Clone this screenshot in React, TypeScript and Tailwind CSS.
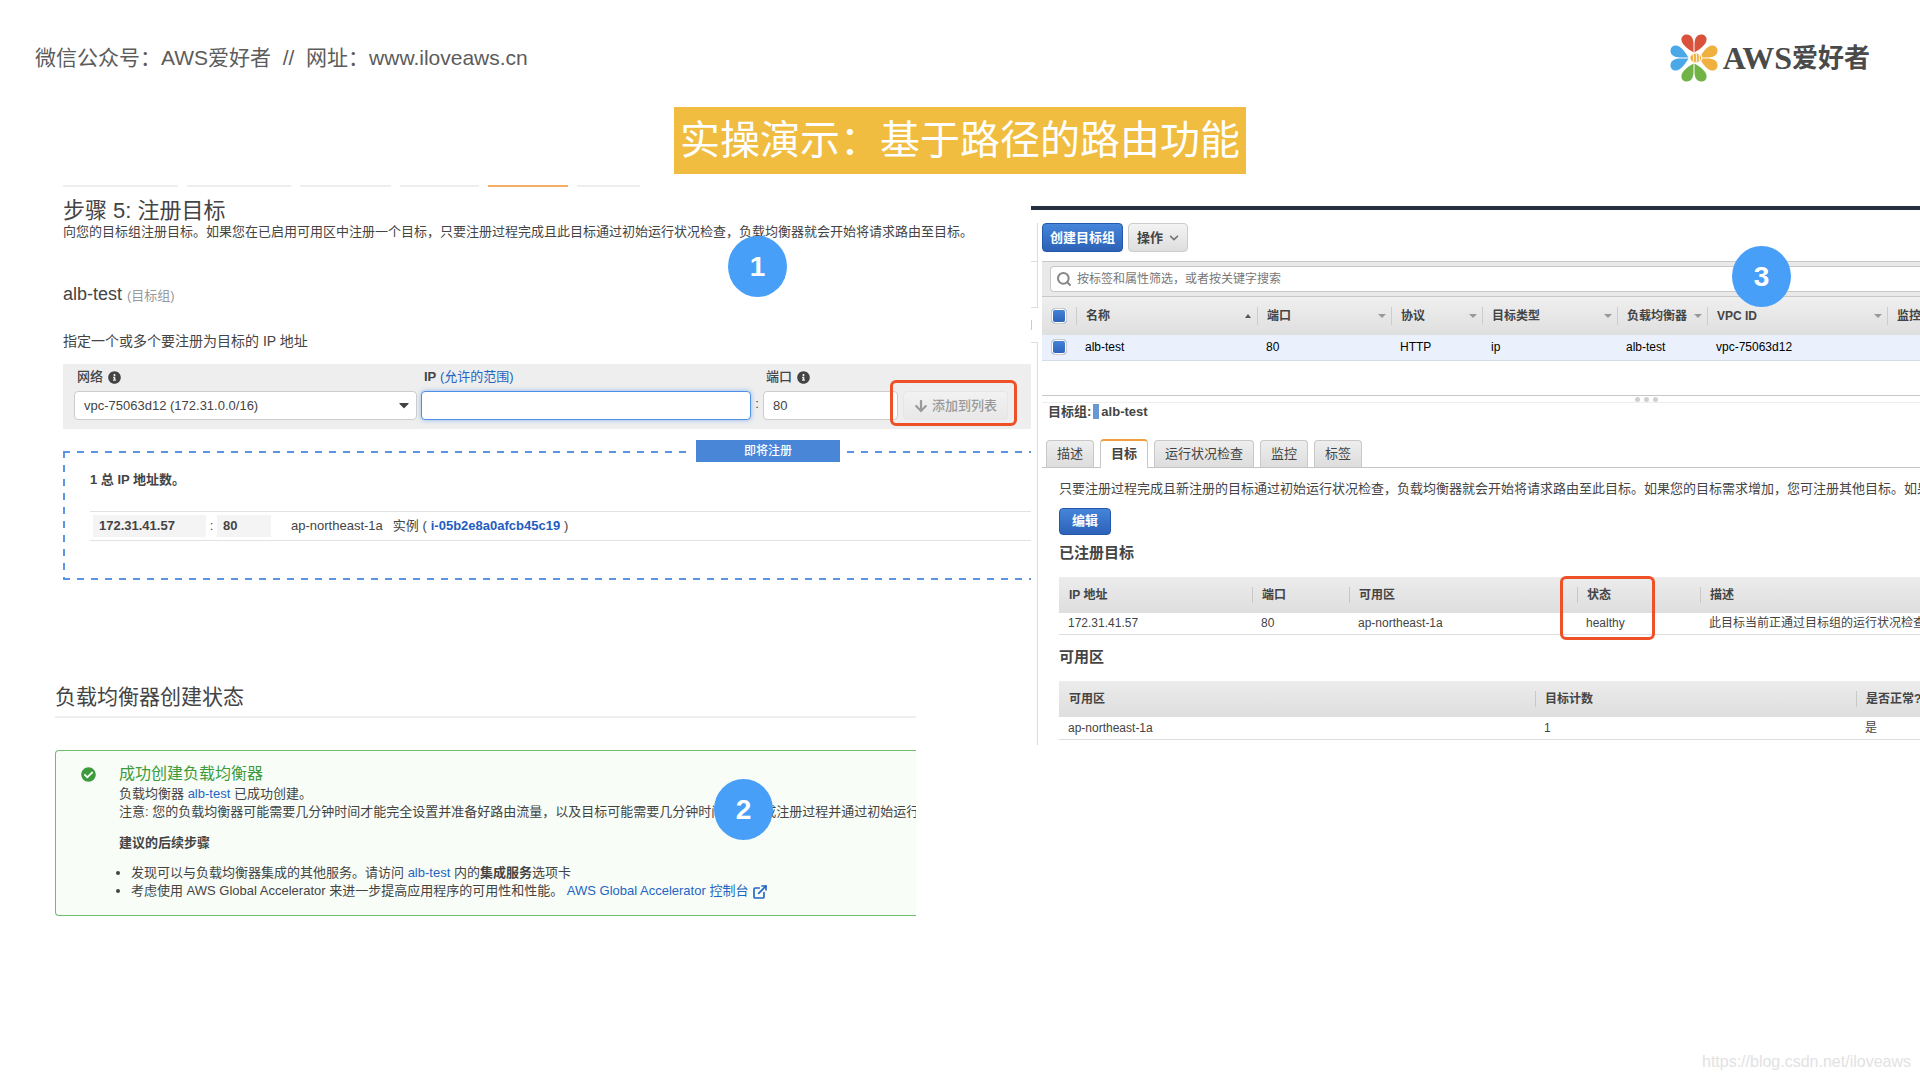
import type { ReactNode } from "react";
import { ExternalLink, Search } from "lucide-react";
import {
  FaArrowDown,
  FaCaretDown,
  FaCheckCircle,
  FaChevronDown,
  FaInfoCircle,
} from "react-icons/fa";

type Column = {
  label: string;
  value: string;
  width: string;
  highlight?: boolean;
};

const steps = [
  { width: "w-[115px]", active: false },
  { width: "w-[104px]", active: false },
  { width: "w-[91px]", active: false },
  { width: "w-[79px]", active: false },
  { width: "w-20", active: true },
  { width: "w-[63px]", active: false },
];

const groupColumns: Column[] = [
  { label: "名称", value: "alb-test", width: "w-[181px]" },
  { label: "端口", value: "80", width: "w-[134px]" },
  { label: "协议", value: "HTTP", width: "w-[91px]" },
  { label: "目标类型", value: "ip", width: "w-[135px]" },
  { label: "负载均衡器", value: "alb-test", width: "w-[90px]" },
  { label: "VPC ID", value: "vpc-75063d12", width: "w-[180px]" },
  { label: "监控", value: "", width: "" },
];

const targetColumns: Column[] = [
  { label: "IP 地址", value: "172.31.41.57", width: "w-[193px]" },
  { label: "端口", value: "80", width: "w-[97px]" },
  { label: "可用区", value: "ap-northeast-1a", width: "w-[228px]" },
  { label: "状态", value: "healthy", width: "w-[123px]", highlight: true },
  { label: "描述", value: "此目标当前正通过目标组的运行状况检查。", width: "" },
];

const zoneColumns: Column[] = [
  { label: "可用区", value: "ap-northeast-1a", width: "w-[476px]" },
  { label: "目标计数", value: "1", width: "w-[321px]" },
  { label: "是否正常?", value: "是", width: "" },
];

const tabs = ["描述", "目标", "运行状况检查", "监控", "标签"];

function Logo() {
  const petals = [
    { angle: 0, color: "#d9533c" },
    { angle: 90, color: "#efb03f" },
    { angle: 180, color: "#71b346" },
    { angle: 270, color: "#4aa8e8" },
  ];

  return (
    <div className="flex items-center gap-[5px]">
      <svg viewBox="0 0 48 48" className="size-12" aria-hidden="true">
        {petals.map((petal) => (
          <g
            key={petal.angle}
            fill={petal.color}
            transform={`rotate(${petal.angle} 24 24)`}
          >
            <path d="M23.5 18.4C19.5 16.2 11.4 11 11.4 5.6C11.4 2.6 13.6 0.5 16.8 0.5C21.2 0.5 23.5 4.4 23.5 10Z" />
            <path d="M24.5 18.4C28.5 16.2 36.6 11 36.6 5.6C36.6 2.6 34.4 0.5 31.2 0.5C26.8 0.5 24.5 4.4 24.5 10Z" />
          </g>
        ))}
        <ellipse cx="26" cy="24" rx="6.4" ry="5.6" fill="#fff" />
        <ellipse cx="25.8" cy="24" rx="5.4" ry="4.6" fill="#efb03f" />
        <path
          d="M23 20Q24.5 24 23 28M26 19Q27.5 24 26 29M29 20Q30 24 29 28"
          stroke="#fff"
          strokeWidth="0.9"
          fill="none"
        />
      </svg>
      <span className="flex items-center leading-8 font-bold text-[#4a4a4a]">
        <span className="font-['Liberation_Serif',serif] text-[32px]">AWS</span>
        <span className="text-[26px]">爱好者</span>
      </span>
    </div>
  );
}

function Badge({ place, children }: { place: string; children: ReactNode }) {
  return (
    <span
      className={`absolute z-20 flex h-[61px] w-[59px] items-center justify-center rounded-[50%] bg-[#489ff8] text-[28px] font-bold text-white ${place}`}
    >
      {children}
    </span>
  );
}

function RegisterStep() {
  return (
    <section className="relative ml-[63px] text-[13px] leading-[18px]">
      <div className="flex gap-[9px]">
        {steps.map((step, index) => (
          <span
            key={index}
            className={`h-[2px] ${step.width} ${step.active ? "bg-[#f3ae68]" : "bg-[#eeeeee]"}`}
          />
        ))}
      </div>

      <h2 className="mt-3 text-[22px] leading-6">步骤 5: 注册目标</h2>
      <p className="whitespace-nowrap">
        向您的目标组注册目标。如果您在已启用可用区中注册一个目标，只要注册过程完成且此目标通过初始运行状况检查，负载均衡器就会开始将请求路由至目标。
      </p>

      <h3 className="mt-[43px] text-lg leading-5">
        alb-test <small className="text-[13px] text-[#999999]">(目标组)</small>
      </h3>

      <p className="mt-[25px] text-sm leading-5">指定一个或多个要注册为目标的 IP 地址</p>

      {/* Form */}
      <div className="mt-[13px] grid grid-cols-[347fr_330fr_12px_135fr_110fr] items-end bg-[#eeeeee] pt-1 pr-[23px] pb-[9px] pl-[11px]">
        <div className="pr-1">
          <label htmlFor="network" className="mb-[5px] flex items-center gap-[5px] pl-[3px] font-medium">
            网络 <FaInfoCircle className="size-[13px]" />
          </label>
          <div className="relative">
            <select
              id="network"
              className="block h-[29px] w-full appearance-none rounded border border-[#cccccc] bg-white px-[9px]"
            >
              <option>vpc-75063d12 (172.31.0.0/16)</option>
            </select>
            <FaCaretDown className="pointer-events-none absolute top-[6px] right-[5px] size-4" />
          </div>
        </div>

        <div>
          <div className="mb-[5px] pl-[3px]">
            <label htmlFor="ip" className="font-bold">IP</label>{" "}
            <a href="#" className="text-[#2464c4]">(允许的范围)</a>
          </div>
          <input
            id="ip"
            className="block h-[29px] w-full rounded border border-[#4f8fe6] bg-white px-2 shadow-[0_0_5px_#8db7ee] outline-none"
          />
        </div>

        <span className="pb-[7px] text-center">:</span>

        <div>
          <label htmlFor="port" className="mb-[5px] flex items-center gap-[5px] pl-[3px] font-medium">
            端口 <FaInfoCircle className="size-[13px]" />
          </label>
          <input
            id="port"
            defaultValue="80"
            className="block h-[29px] w-full rounded border border-[#cccccc] bg-white px-[9px]"
          />
        </div>

        <div className="relative pl-[5px]">
          <button
            type="button"
            className="flex h-[29px] w-full items-center justify-center gap-1 rounded border border-[#e6e6e6] bg-linear-to-b from-[#f2f2f2] to-[#e8e8e8] font-medium whitespace-nowrap text-[#999999]"
          >
            <FaArrowDown className="size-[14px]" /> 添加到列表
          </button>
          <span className="pointer-events-none absolute -top-[11px] -right-[9px] -bottom-[6px] -left-2 rounded-md border-3 border-[#ee5028]" />
        </div>
      </div>

      {/* Pending targets */}
      <div className="relative mt-[22px] pt-5 pb-[39px] pl-[27px]">
        <div className="absolute inset-x-0 top-0 h-[2px] bg-[repeating-linear-gradient(90deg,#5b94e3_0_7px,transparent_7px_14px)]" />
        <div className="absolute inset-x-0 bottom-0 h-[2px] bg-[repeating-linear-gradient(90deg,#5b94e3_0_7px,transparent_7px_14px)]" />
        <div className="absolute inset-y-0 left-0 w-[2px] bg-[repeating-linear-gradient(180deg,#5b94e3_0_7px,transparent_7px_14px)]" />

        <div className="absolute -top-[11px] left-[627px] bg-white px-[6px]">
          <div className="bg-[#4a86d8] px-12 py-[2px] text-xs leading-[18px] font-medium text-white">
            即将注册
          </div>
        </div>

        <p className="font-bold">1 总 IP 地址数。</p>

        <div className="mt-[22px] flex items-center border-y border-[#e2e2e2] py-[3px] pl-[3px] whitespace-nowrap">
          <strong className="w-[113px] bg-[#f4f4f4] px-[6px] py-1 leading-[14px]">172.31.41.57</strong>
          <span className="w-[11px] text-center">:</span>
          <strong className="w-[54px] bg-[#f4f4f4] px-[6px] py-1 leading-[14px]">80</strong>
          <span className="ml-5">ap-northeast-1a</span>
          <span className="ml-[10px]">
            实例 (<a href="#" className="px-1 font-bold text-[#1f5cc0]">i-05b2e8a0afcb45c19</a>)
          </span>
        </div>
      </div>

      <Badge place="top-[51px] left-[665px]">1</Badge>
    </section>
  );
}

function CreationStatus() {
  return (
    <section className="relative mt-[103px] mr-[115px] ml-[55px] text-[13px] leading-[18px]">
      <h2 className="border-b-2 border-[#eeeeee] pb-[5px] text-[21px] leading-7">
        负载均衡器创建状态
      </h2>

      <div className="mt-[32px] flex overflow-hidden rounded-l border border-r-0 border-[#6ebd6e] bg-[#f8fdf7] pt-3 pb-[15px] pl-[25px] whitespace-nowrap">
        <FaCheckCircle className="mt-1 size-[15px] shrink-0 text-[#3d9a3d]" />

        <div className="ml-[23px] min-w-0">
          <h3 className="text-base leading-[22px] text-[#3d9a3d]">成功创建负载均衡器</h3>
          <p>
            负载均衡器 <a href="#" className="text-[#2464c4]">alb-test</a> 已成功创建。
          </p>
          <p>
            注意: 您的负载均衡器可能需要几分钟时间才能完全设置并准备好路由流量，以及目标可能需要几分钟时间才能完成注册过程并通过初始运行状况检查。
          </p>

          <h4 className="mt-[13px] font-bold">建议的后续步骤</h4>

          <ul className="mt-3 list-disc pl-3">
            <li>
              发现可以与负载均衡器集成的其他服务。请访问{" "}
              <a href="#" className="text-[#2464c4]">alb-test</a> 内的<b>集成服务</b>选项卡
            </li>
            <li>
              考虑使用 AWS Global Accelerator 来进一步提高应用程序的可用性和性能。{" "}
              <a href="#" className="text-[#2464c4]">
                AWS Global Accelerator 控制台{" "}
                <ExternalLink className="inline size-4" strokeWidth={2.5} />
              </a>
            </li>
          </ul>
        </div>
      </div>

      <Badge place="top-[96px] left-[659px]">2</Badge>
    </section>
  );
}

function DetailTable({ columns }: { columns: Column[] }) {
  return (
    <table className="mt-[14px] w-full table-fixed border-b border-[#dddddd] text-left text-xs whitespace-nowrap">
      <thead className="bg-linear-to-b from-[#ececec] to-[#dedede]">
        <tr className="h-9">
          {columns.map((column, index) => (
            <th key={column.label} className={`relative p-0 ${column.width}`}>
              <div className={`border-l pl-[9px] leading-4 ${index ? "border-[#c8c8c8]" : "border-transparent"}`}>
                {column.label}
              </div>
              {column.highlight && (
                <span className="absolute -top-px -left-[17px] z-10 h-16 w-[95px] rounded-md border-3 border-[#ee5028]" />
              )}
            </th>
          ))}
        </tr>
      </thead>
      <tbody>
        <tr className="h-[22px]">
          {columns.map((column) => (
            <td key={column.label} className="py-0 pr-0 pl-[9px]">{column.value}</td>
          ))}
        </tr>
      </tbody>
    </table>
  );
}

function Checkbox({ label }: { label: string }) {
  return (
    <input
      type="checkbox"
      defaultChecked
      aria-label={label}
      className="ml-[9px] block size-4 appearance-none rounded border border-[#cccccc] bg-linear-to-b from-[#4585da] to-[#2c62b8] shadow-[inset_0_0_0_1px_#ffffff]"
    />
  );
}

function TargetGroups() {
  return (
    <section className="relative mt-8 min-w-0 border-t-4 border-[#252f3f] text-xs">
      <div className="flex">
        {/* Edge of the collapsed side menu */}
        <div className="flex w-[11px] shrink-0 flex-col">
          <div className="mt-[13px] h-[38px] w-[7px] border-r border-[#dddddd]" />
          <div className="h-[47px] w-[7px] border border-l-0 border-[#dddddd]" />
          <div className="mt-3 h-[10px] border-l border-[#cccccc]" />
          <div className="mt-3 w-[7px] flex-1 border-t border-r border-[#dddddd]" />
        </div>

        <div className="min-w-0 flex-1 pt-[13px] pb-[5px]">
          <div className="flex gap-[5px] text-[13px] font-bold">
            <button
              type="button"
              className="h-[29px] rounded border border-[#2458a8] bg-linear-to-b from-[#4585da] to-[#2c62b8] px-[7px] text-white"
            >
              创建目标组
            </button>
            <button
              type="button"
              className="flex h-[29px] items-center gap-[6px] rounded border border-[#cccccc] bg-linear-to-b from-[#f3f3f3] to-[#dedede] px-2"
            >
              操作 <FaChevronDown className="size-[10px] text-[#777777]" />
            </button>
          </div>

          <div className="mt-[9px] h-9 border-t border-b border-[#c8c8c8] bg-[#e9e9e9] pt-1 pl-2">
            <label className="flex h-[26px] items-center gap-[5px] rounded-l border border-r-0 border-[#c8c8c8] bg-white pl-[5px]">
              <Search className="size-4 text-[#888888]" strokeWidth={3} />
              <input
                type="search"
                placeholder="按标签和属性筛选，或者按关键字搜索"
                aria-label="搜索"
                className="min-w-0 flex-1 outline-none placeholder:text-[#777777]"
              />
            </label>
          </div>

          <table className="w-full table-fixed text-left whitespace-nowrap">
            <thead className="bg-linear-to-b from-[#efefef] to-[#dfdfdf]">
              <tr className="h-[38px]">
                <th className="w-[34px] p-0"><Checkbox label="全选" /></th>
                {groupColumns.map((column, index) => (
                  <th key={column.label} className={`p-0 ${column.width}`}>
                    <div className="flex items-center justify-between border-l border-[#cccccc] pr-[5px] pl-[9px] leading-[18px]">
                      {column.label}
                      <svg viewBox="0 0 8 4" className="h-1 w-2" aria-hidden="true">
                        {index === 0
                          ? <path d="M1 4L4 0L7 4Z" fill="#555555" />
                          : <path d="M0 0H8L4 4Z" fill="#999999" />}
                      </svg>
                    </div>
                  </th>
                ))}
              </tr>
            </thead>
            <tbody>
              <tr className="h-[25px] border-b border-[#d5dde8] bg-[#eaf1fd] text-black">
                <td className="p-0"><Checkbox label="alb-test" /></td>
                {groupColumns.map((column) => (
                  <td key={column.label} className="py-0 pr-0 pl-[9px]">{column.value}</td>
                ))}
              </tr>
            </tbody>
          </table>

          {/* Splitter */}
          <div className="mt-[34px] flex h-2 items-end justify-center gap-1 border-y border-t-[#c8c8c8] border-b-[#eeeeee] pl-[330px]">
            <i className="size-[5px] rounded-full bg-[#d0d0d0]" />
            <i className="size-[5px] rounded-full bg-[#d0d0d0]" />
            <i className="size-[5px] rounded-full bg-[#d0d0d0]" />
          </div>

          <h3 className="flex items-center gap-[2px] pl-[6px] text-[13px] leading-[18px] font-bold">
            目标组: <span className="h-[15px] w-[6px] bg-[#6798d4]" /> alb-test
          </h3>

          <div role="tablist" className="mt-[18px] flex gap-[6px] border-b border-[#c4c4c4] pl-1 text-[13px]">
            {tabs.map((tab) => (
              <button
                key={tab}
                type="button"
                role="tab"
                aria-selected={tab === "目标"}
                className={
                  tab === "目标"
                    ? "-mb-px h-[29px] rounded-t border-x border-t-2 border-x-[#c8c8c8] border-t-[#f0a040] bg-white px-[10px] font-bold"
                    : "mt-px h-[27px] rounded-t border border-b-0 border-[#c8c8c8] bg-linear-to-b from-[#eeeeee] to-[#dddddd] px-[10px]"
                }
              >
                {tab}
              </button>
            ))}
          </div>

          <div className="mt-3 pl-[17px]">
            <p className="text-[13px] leading-[18px] whitespace-nowrap">
              只要注册过程完成且新注册的目标通过初始运行状况检查，负载均衡器就会开始将请求路由至此目标。如果您的目标需求增加，您可注册其他目标。如果您的目标需求减少，您可取消注册目标。
            </p>
            <button
              type="button"
              className="mt-[10px] block h-[27px] rounded border border-[#2458a8] bg-linear-to-b from-[#4585da] to-[#2c62b8] px-3 text-[13px] font-bold text-white"
            >
              编辑
            </button>

            <h4 className="mt-2 text-[15px] leading-5 font-bold">已注册目标</h4>
            <DetailTable columns={targetColumns} />

            <h4 className="mt-3 text-[15px] leading-5 font-bold">可用区</h4>
            <DetailTable columns={zoneColumns} />
          </div>
        </div>
      </div>

      <Badge place="top-9 left-[701px]">3</Badge>
    </section>
  );
}

export default function App() {
  return (
    <div className="flex min-h-screen flex-col overflow-hidden bg-white font-['Liberation_Sans','Noto_Sans_CJK_SC',sans-serif] text-[#444444]">
      <header className="flex items-center justify-between pt-[34px] pr-[50px] pl-[35px]">
        <p className="text-[21px] whitespace-pre text-[#5c5c5c]">
          微信公众号：AWS爱好者  //  网址：www.iloveaws.cn
        </p>
        <Logo />
      </header>

      <h1 className="mx-auto mt-[25px] bg-[#f0bd40] px-[6px] text-[40px] leading-[67px] text-white">
        实操演示：基于路径的路由功能
      </h1>

      <main className="grid grid-cols-[1031fr_889fr] items-start">
        <div className="min-w-0 pt-[11px]">
          <RegisterStep />
          <CreationStatus />
        </div>
        <TargetGroups />
      </main>

      <footer className="mt-auto pr-[9px] pb-[6px] text-right text-base text-[#e2e2e2]">
        https://blog.csdn.net/iloveaws
      </footer>
    </div>
  );
}
